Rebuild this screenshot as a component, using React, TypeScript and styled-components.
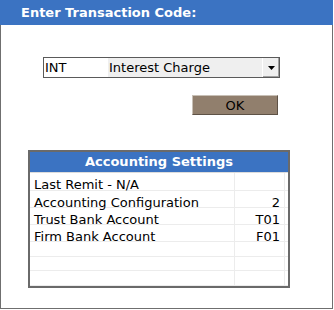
import styled, { createGlobalStyle } from "styled-components";

const Global = createGlobalStyle`
  html, body {
    margin: 0;
    padding: 0;
    background: #ffffff;
  }
  body {
    font-family: "DejaVu Sans", Verdana, sans-serif;
    font-size: 13px;
    color: #000000;
  }
`;

const Frame = styled.div`
  width: 333px;
  height: 309px;
  box-sizing: border-box;
  border: 1px solid #6f6f6f;
  border-top: none;
  display: flex;
  flex-direction: column;
  background: #ffffff;
`;

const TitleBar = styled.div`
  height: 25px;
  background: #3b73c2;
  color: #ffffff;
  font-weight: bold;
  font-size: 13px;
  display: flex;
  align-items: center;
  padding-left: 21px;
  margin-left: -1px;
  margin-right: -1px;
`;

const Body = styled.div`
  display: flex;
  flex-direction: column;
  padding: 32px 0 0 42px;
`;

const Select = styled.div`
  width: 237px;
  height: 21px;
  box-sizing: border-box;
  border: 1px solid #5a5a5a;
  display: flex;
  align-items: stretch;
`;

const Code = styled.div`
  width: 63px;
  background: #ffffff;
  padding-left: 1px;
  display: flex;
  align-items: center;
`;

const Desc = styled.div`
  flex: 1;
  background: #efefef;
  padding-left: 1px;
  display: flex;
  align-items: center;
`;

const Arrow = styled.div`
  width: 16px;
  background: #efefef;
  border-left: 1px solid #ffffff;
  box-shadow: inset -1px -1px 0 #a0a0a0;
  display: flex;
  align-items: center;
  justify-content: center;
`;

const OkButton = styled.button`
  align-self: flex-start;
  margin: 17px 0 0 149px;
  width: 86px;
  height: 20px;
  padding: 0;
  background: #917f6d;
  border: 1px solid;
  border-color: #c8c0b6 #5e5246 #5e5246 #c8c0b6;
  font-family: "DejaVu Sans", Verdana, sans-serif;
  font-size: 13px;
  color: #000000;
`;

const Settings = styled.div`
  margin: 35px 0 0 -15px;
  width: 262px;
  height: 138px;
  box-sizing: border-box;
  border: 2px solid #6a6a6a;
  display: flex;
  flex-direction: column;
  overflow: hidden;
`;

const SettingsHead = styled.div`
  height: 23px;
  background: #3b73c2;
  color: #ffffff;
  font-weight: bold;
  font-size: 13px;
  display: flex;
  align-items: center;
  justify-content: center;
  border-bottom: 1px solid #dcdcdc;
`;

const Row = styled.div<{ $first?: boolean }>`
  display: grid;
  grid-template-columns: 205px 50px;
  height: ${(p) => (p.$first ? 17 : 16)}px;
  border-bottom: 1px solid #ececec;
`;

const Cell = styled.div<{ $right?: boolean }>`
  display: flex;
  align-items: center;
  padding: 4px 4px 0;
  justify-content: ${(p) => (p.$right ? "flex-end" : "flex-start")};
  border-right: 1px solid #ececec;
  white-space: nowrap;
`;

const rows: [string, string][] = [
  ["Last Remit - N/A", ""],
  ["Accounting Configuration", "2"],
  ["Trust Bank Account", "T01"],
  ["Firm Bank Account", "F01"],
  ["", ""],
  ["", ""],
  ["", ""],
];

export default function App() {
  return (
    <>
      <Global />
      <Frame>
        <TitleBar>Enter Transaction Code:</TitleBar>
        <Body>
          <Select>
            <Code>INT</Code>
            <Desc>Interest Charge</Desc>
            <Arrow>
              <svg width="7" height="4" viewBox="0 0 7 4">
                <path d="M0 0h7L3.5 4z" fill="#000" />
              </svg>
            </Arrow>
          </Select>
          <OkButton>OK</OkButton>
          <Settings>
            <SettingsHead>Accounting Settings</SettingsHead>
            {rows.map(([label, value], i) => (
              <Row key={i} $first={i === 0}>
                <Cell>{label}</Cell>
                <Cell $right>{value}</Cell>
              </Row>
            ))}
          </Settings>
        </Body>
      </Frame>
    </>
  );
}
